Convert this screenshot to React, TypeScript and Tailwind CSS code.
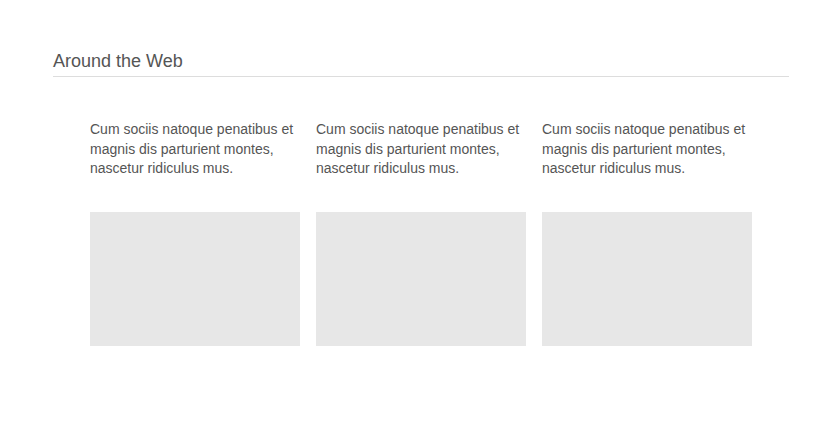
import React from 'react';

const items = [
  'Cum sociis natoque penatibus et magnis dis parturient montes, nascetur ridiculus mus.',
  'Cum sociis natoque penatibus et magnis dis parturient montes, nascetur ridiculus mus.',
  'Cum sociis natoque penatibus et magnis dis parturient montes, nascetur ridiculus mus.',
];

export default function App() {
  return (
    <div className="min-h-[444px] w-full bg-white pl-[53px] pr-[47px] pt-[50px] font-['Liberation_Sans',Arial,sans-serif]">
      <h2 className="border-b border-[#dddddd] pb-[4px] text-[18px] leading-[22px] font-normal text-[#555555]">
        Around the Web
      </h2>
      <div className="mt-[43px] ml-[37px] grid grid-cols-[210px_210px_210px] gap-4">
        {items.map((text, i) => (
          <div key={i} className="flex flex-col">
            <p className="text-[14px] leading-[1.4] text-[#555555]">{text}</p>
            <div className="mt-[33px] h-[134px] bg-[#e7e7e7]" />
          </div>
        ))}
      </div>
    </div>
  );
}
